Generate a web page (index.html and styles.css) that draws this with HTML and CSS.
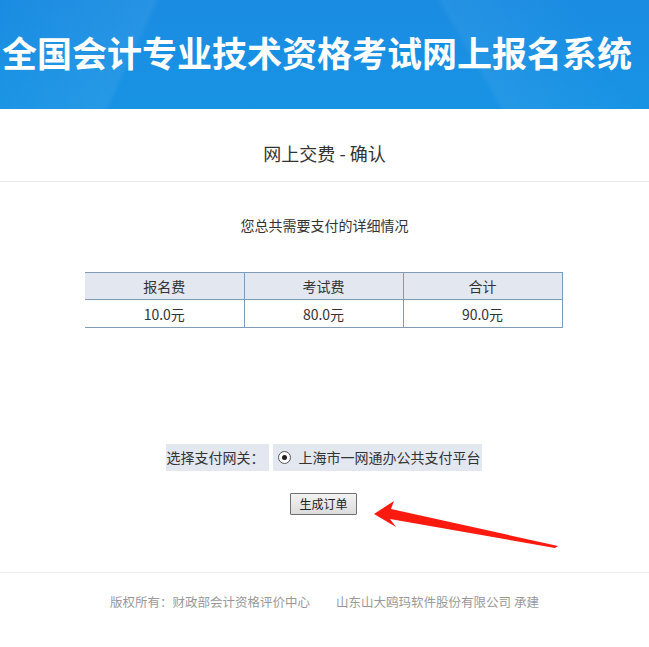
FILE: index.html
```html
<!DOCTYPE html>
<html>
<head>
<meta charset="UTF-8" /><title>网上交费 - 确认</title>
<link rel="stylesheet" href="styles.css">
</head>
<body>
<div class="header">
	<h1>全国会计专业技术资格考试网上报名系统</h1>
</div>
<div class="title">网上交费 - 确认</div>
<div class="main">
	<p class="tip">您总共需要支付的详细情况</p>
	<table class="fee">
		<tr><th>报名费</th><th>考试费</th><th>合计</th></tr>
		<tr><td>10.0元</td><td>80.0元</td><td>90.0元</td></tr>
	</table>
	<div class="pay">
		<span class="label">选择支付网关：</span>
		<span class="option"><span class="radio"></span>上海市一网通办公共支付平台</span>
	</div>
	<div class="submit"><span class="button">生成订单</span></div>
	<svg class="arrow" width="200" height="50" viewBox="0 0 200 50">
		<polygon points="0,13 20,0 17,8 184,45 181,47 16,18 22,26" fill="#ff1a0f"/>
	</svg>
</div>
<div class="footer">
	<span>版权所有：财政部会计资格评价中心</span><span>山东山大鸥玛软件股份有限公司 承建</span>
</div>
</body>
</html>
```

FILE: styles.css
```css
* {
	padding: 0px;
	margin: 0px;
	box-sizing: border-box;
}
body {
	font-family: "Noto Sans CJK SC", "Liberation Sans", sans-serif;
	color: #333;
	background: #fff;
	width: 649px;
}
.header {
	height: 109px;
	background:
		linear-gradient(115deg, rgba(255,255,255,0) 0%, rgba(255,255,255,0.06) 22%, rgba(255,255,255,0) 23%),
		linear-gradient(60deg, rgba(255,255,255,0) 70%, rgba(255,255,255,0.05) 71%, rgba(255,255,255,0) 90%),
		linear-gradient(180deg, #1a8ce2, #1893e4);
	display: flex;
	align-items: center;
	padding-left: 2px;
}
.header h1 {
	color: #fff;
	font-size: 35px;
	font-weight: bold;
	white-space: nowrap;
	margin-top: -6px;
}
.title {
	height: 73px;
	line-height: 88px;
	text-align: center;
	font-size: 18px;
	color: #333;
	border-bottom: 1px solid #ececec;
}
.main {
	position: relative;
	height: 391px;
	border-bottom: 1px solid #ececec;
}
.tip {
	text-align: center;
	font-size: 14px;
	padding-top: 34px;
	line-height: 18px;
}
.fee {
	width: 477px;
	margin: 38px 0 0 85px;
	border-collapse: collapse;
	table-layout: fixed;
	font-size: 14px;
}
.fee th, .fee td {
	border: 1px solid #7f9bb6;
	text-align: center;
	font-weight: normal;
	height: 28px;
	width: 159px;
}
.fee tr > :first-child { border-left: none; }
.fee th {
	background: #e2e7f0;
	height: 27px;
}
.pay {
	display: flex;
	justify-content: center;
	gap: 4px;
	margin-top: 116px;
	font-size: 14px;
	margin-left: -2px;
}
.pay .label, .pay .option {
	background: #e2e7f0;
	height: 27px;
	line-height: 27px;
	display: flex;
	align-items: center;
}
.pay .label { padding: 0 4px 0 1px; }
.pay .option { padding: 0 1px 0 5px; }
.radio {
	width: 13px;
	height: 13px;
	border: 1px solid #555;
	border-radius: 50%;
	background: #fff;
	margin-right: 8px;
	position: relative;
}
.radio::after {
	content: "";
	position: absolute;
	left: 3px;
	top: 3px;
	width: 5px;
	height: 5px;
	border-radius: 50%;
	background: #222;
}
.submit {
	text-align: center;
	margin-top: 19px;
	margin-left: -2px;
}
.button {
	display: inline-block;
	font-size: 12px;
	height: 22px;
	line-height: 20px;
	padding: 0 8px;
	color: #222;
	border: 1px solid #707070;
	border-radius: 1px;
	background: linear-gradient(180deg, #f3f3f3, #dcdcdc);
}
.arrow {
	position: absolute;
	left: 374px;
	top: 319px;
}
.footer {
	text-align: center;
	font-size: 12.5px;
	color: #999;
	padding-top: 19px;
}
.footer span + span {
	margin-left: 26px;
}
```
